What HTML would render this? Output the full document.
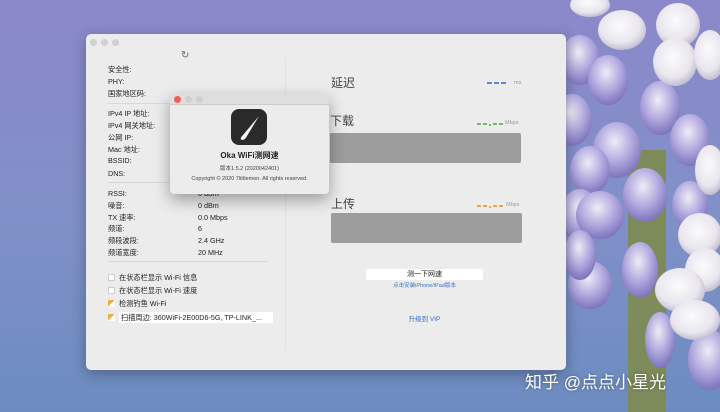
<!DOCTYPE html>
<html><head><meta charset="utf-8"><style>
*{margin:0;padding:0;box-sizing:border-box}
body{width:720px;height:412px;overflow:hidden;position:relative;font-family:"Liberation Sans","Noto Sans CJK SC",sans-serif;background:linear-gradient(180deg,#8b88c9 0%,#8190c8 50%,#6c8cc0 100%)}
.abs{position:absolute}
.win{left:86px;top:34px;width:480px;height:336px;background:#ececec;border-radius:5px;box-shadow:0 4px 14px rgba(0,0,0,.3)}
.dot{width:7px;height:7px;border-radius:50%;background:#d0d0d0;top:5px}
.l{font-size:7.2px;color:#222;position:absolute;left:22px;white-space:nowrap}
.v{font-size:7.2px;color:#222;position:absolute;left:112px;white-space:nowrap}
.hr{position:absolute;height:1px;background:#d8d8d8}
.cb{position:absolute;left:22px;width:7px;height:7px;background:#fff;border:1px solid #ccc;border-radius:1px}
.cb2{position:absolute;left:22px;width:7px;height:7px;background:linear-gradient(135deg,#f0b040 50%,#fff 50%)}
.big{position:absolute;font-size:12px;color:#444}
.bar{position:absolute;background:#9d9d9d;border-radius:2px}
.unit{position:absolute;font-size:5.5px;color:#999}
.d{position:absolute;height:2px;width:5px}
</style></head><body>
<svg class="abs" style="left:560px;top:0" width="160" height="412">
<defs><radialGradient id="f" cx="45%" cy="35%" r="65%"><stop offset="0" stop-color="#f0ecf6"/><stop offset=".55" stop-color="#b2aadf"/><stop offset="1" stop-color="#7d74bc"/></radialGradient>
<radialGradient id="w" cx="45%" cy="40%" r="60%"><stop offset="0" stop-color="#fbfbfb"/><stop offset=".7" stop-color="#e9e6ee"/><stop offset="1" stop-color="#c2bed2"/></radialGradient></defs>
<rect x="68" y="150" width="38" height="262" fill="#7d8a5a"/>
<g fill="url(#f)">
<ellipse cx="20" cy="60" rx="20" ry="25"/><ellipse cx="48" cy="80" rx="20" ry="25"/><ellipse cx="12" cy="120" rx="20" ry="26"/><ellipse cx="100" cy="108" rx="20" ry="27"/><ellipse cx="57" cy="150" rx="24" ry="28"/><ellipse cx="30" cy="170" rx="20" ry="24"/><ellipse cx="130" cy="140" rx="20" ry="26"/><ellipse cx="85" cy="195" rx="22" ry="27"/><ellipse cx="20" cy="215" rx="20" ry="26"/><ellipse cx="40" cy="215" rx="24" ry="24"/><ellipse cx="130" cy="205" rx="18" ry="24"/><ellipse cx="30" cy="285" rx="22" ry="24"/><ellipse cx="80" cy="270" rx="18" ry="28"/><ellipse cx="20" cy="255" rx="16" ry="25"/><ellipse cx="150" cy="360" rx="22" ry="30"/><ellipse cx="100" cy="340" rx="15" ry="28"/></g>
<g fill="url(#w)">
<ellipse cx="62" cy="30" rx="24" ry="20"/><ellipse cx="118" cy="25" rx="22" ry="22"/><ellipse cx="115" cy="62" rx="22" ry="24"/><ellipse cx="150" cy="55" rx="16" ry="25"/><ellipse cx="150" cy="170" rx="15" ry="25"/><ellipse cx="140" cy="235" rx="22" ry="22"/><ellipse cx="145" cy="270" rx="20" ry="22"/><ellipse cx="120" cy="290" rx="25" ry="22"/><ellipse cx="135" cy="320" rx="25" ry="20"/><ellipse cx="30" cy="5" rx="20" ry="12"/></g>
</svg>
<div class="abs win">
<div class="abs dot" style="left:4px"></div><div class="abs dot" style="left:15px"></div><div class="abs dot" style="left:26px"></div>
<div class="abs" style="left:95px;top:16px;font-size:10px;color:#666">↻</div>
<div class="abs" style="left:199px;top:25px;width:1px;height:290px;background:#e2e2e2"></div>
<div class="l" style="top:31px">安全性:</div><div class="l" style="top:43px">PHY:</div><div class="l" style="top:55px">国家地区码:</div>
<div class="hr" style="left:22px;top:69px;width:160px"></div>
<div class="l" style="top:75px">IPv4 IP 地址:</div><div class="l" style="top:87px">IPv4 网关地址:</div><div class="l" style="top:99px">公网 IP:</div><div class="l" style="top:111px">Mac 地址:</div><div class="l" style="top:122px">BSSID:</div><div class="l" style="top:135px">DNS:</div>
<div class="hr" style="left:22px;top:148px;width:160px"></div>
<div class="l" style="top:155px">RSSI:</div><div class="v" style="top:155px">0 dBm</div>
<div class="l" style="top:167px">噪音:</div><div class="v" style="top:167px">0 dBm</div>
<div class="l" style="top:179px">TX 速率:</div><div class="v" style="top:179px">0.0 Mbps</div>
<div class="l" style="top:190px">频道:</div><div class="v" style="top:190px">6</div>
<div class="l" style="top:202px">频段波段:</div><div class="v" style="top:202px">2.4 GHz</div>
<div class="l" style="top:214px">频道宽度:</div><div class="v" style="top:214px">20 MHz</div>
<div class="hr" style="left:22px;top:227px;width:160px"></div>
<div class="cb" style="top:240px"></div><div class="l" style="left:33px;top:239px">在状态栏显示 Wi-Fi 信息</div>
<div class="cb" style="top:253px"></div><div class="l" style="left:33px;top:252px">在状态栏显示 Wi-Fi 速度</div>
<div class="cb2" style="top:266px"></div><div class="l" style="left:33px;top:265px">检测钓鱼 Wi-Fi</div>
<div class="cb2" style="top:280px"></div><div class="abs" style="left:33px;top:278px;width:154px;height:11px;background:#fff"></div><div class="l" style="left:35px;top:279px">扫描周边: 360WiFi-2E00D6-5G, TP-LINK_...</div>
<div class="big" style="left:245px;top:40px">延迟</div>
<div class="d" style="left:401px;top:48px;background:#5b8be0"></div><div class="d" style="left:408px;top:48px;background:#5b8be0"></div><div class="d" style="left:415px;top:48px;background:#5b8be0"></div>
<div class="unit" style="left:428px;top:46px">ms</div>
<div class="big" style="left:244px;top:78px">下载</div>
<div class="d" style="left:391px;top:89px;width:4px;background:#6ac060"></div><div class="d" style="left:397px;top:89px;width:4px;background:#6ac060"></div><div class="d" style="left:403px;top:90px;width:2px;background:#6ac060"></div><div class="d" style="left:407px;top:89px;width:4px;background:#6ac060"></div><div class="d" style="left:413px;top:89px;width:4px;background:#6ac060"></div>
<div class="unit" style="left:419px;top:86px">Mbps</div>
<div class="bar" style="left:244px;top:99px;width:191px;height:30px"></div>
<div class="big" style="left:245px;top:161px">上传</div>
<div class="d" style="left:391px;top:171px;width:4px;background:#f0a050"></div><div class="d" style="left:397px;top:171px;width:4px;background:#f0a050"></div><div class="d" style="left:403px;top:172px;width:2px;background:#f0a050"></div><div class="d" style="left:407px;top:171px;width:4px;background:#f0a050"></div><div class="d" style="left:413px;top:171px;width:4px;background:#f0a050"></div>
<div class="unit" style="left:420px;top:168px">Mbps</div>
<div class="bar" style="left:245px;top:179px;width:191px;height:30px"></div>
<div class="abs" style="left:280px;top:235px;width:117px;height:11px;background:#fff;border-radius:2px;font-size:7px;text-align:center;line-height:11px;color:#222">测一下网速</div>
<div class="abs" style="left:278px;top:247px;width:121px;font-size:5.5px;text-align:center;color:#3a70c8">点击安装iPhone/iPad版本</div>
<div class="abs" style="left:278px;top:279px;width:121px;font-size:6.5px;text-align:center;color:#3a70c8">升级到 VIP</div>
</div>
<div class="abs" style="left:170px;top:94px;width:159px;height:100px;background:#ececec;border-radius:4px;box-shadow:0 6px 16px rgba(0,0,0,.35);overflow:hidden">
<div class="abs" style="left:0;top:0;width:159px;height:11px;background:#dedede;border-bottom:1px solid #ccc"></div>
<div class="abs" style="left:4px;top:2px;width:7px;height:7px;border-radius:50%;background:#ec5f56"></div>
<div class="abs" style="left:15px;top:2px;width:7px;height:7px;border-radius:50%;background:#cfcfcf"></div>
<div class="abs" style="left:26px;top:2px;width:7px;height:7px;border-radius:50%;background:#cfcfcf"></div>
<svg class="abs" style="left:61px;top:15px" width="36" height="36"><rect width="36" height="36" rx="8" fill="#2a2a2a"/><path d="M28 7 L12 26 Q8 30 11 31 Q14 31 16 27 Z" fill="#f4f4f4"/></svg>
<div class="abs" style="left:0;top:56px;width:159px;text-align:center;font-size:8px;font-weight:bold;color:#222">Oka WiFi测网速</div>
<div class="abs" style="left:0;top:70px;width:159px;text-align:center;font-size:5.5px;color:#444">版本1.5.2 (2020042401)</div>
<div class="abs" style="left:0;top:82px;width:159px;text-align:center;font-size:5.5px;color:#444">Copyright © 2020 7littlemen. All rights reserved.</div>
</div>
<div class="abs" style="left:525px;top:368px;font-size:17px;color:#fff;text-shadow:0 0 3px rgba(0,0,0,.4)">知乎 @点点小星光</div>
</body></html>
